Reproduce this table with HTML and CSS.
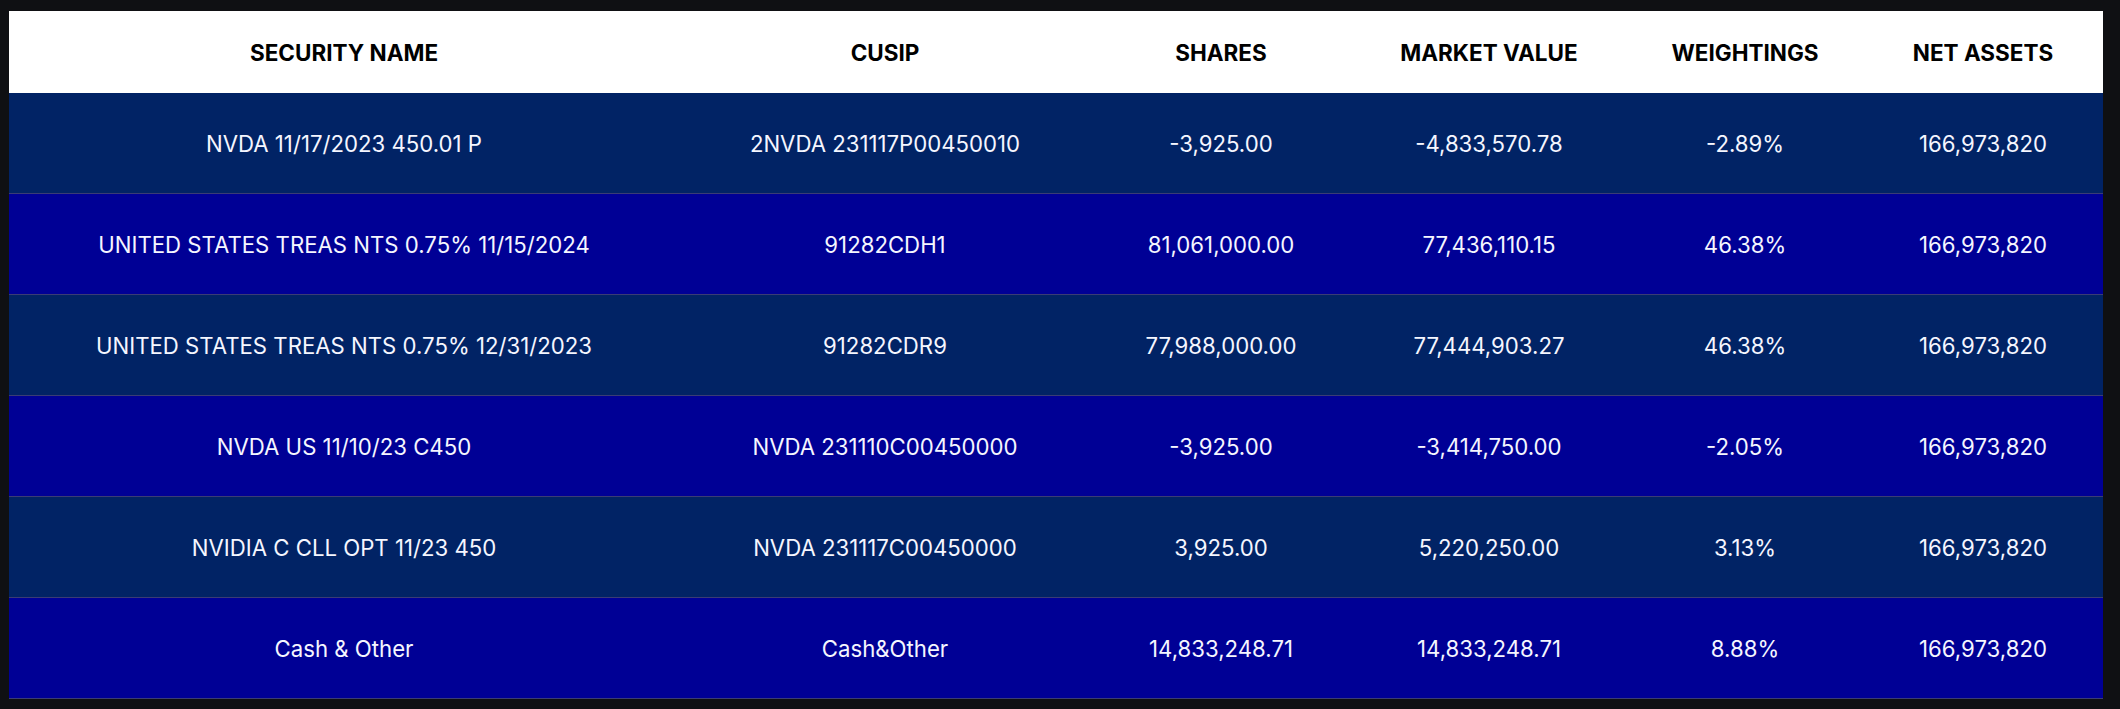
FILE: index.html
```html
<!DOCTYPE html>
<html lang="en">
<head>
<meta charset="utf-8">
<title>Holdings</title>
<link rel="stylesheet" href="styles.css">
</head>
<body>
<div class="frame">
  <table class="holdings">
    <colgroup>
      <col class="c-name">
      <col class="c-cusip">
      <col class="c-shares">
      <col class="c-mv">
      <col class="c-weight">
      <col class="c-net">
    </colgroup>
    <thead>
      <tr>
        <th>SECURITY NAME</th>
        <th>CUSIP</th>
        <th>SHARES</th>
        <th>MARKET VALUE</th>
        <th>WEIGHTINGS</th>
        <th>NET ASSETS</th>
      </tr>
    </thead>
    <tbody>
      <tr class="navy">
        <td>NVDA 11/17/2023 450.01 P</td>
        <td>2NVDA 231117P00450010</td>
        <td>-3,925.00</td>
        <td>-4,833,570.78</td>
        <td>-2.89%</td>
        <td>166,973,820</td>
      </tr>
      <tr class="blue">
        <td>UNITED STATES TREAS NTS 0.75% 11/15/2024</td>
        <td>91282CDH1</td>
        <td>81,061,000.00</td>
        <td>77,436,110.15</td>
        <td>46.38%</td>
        <td>166,973,820</td>
      </tr>
      <tr class="navy">
        <td>UNITED STATES TREAS NTS 0.75% 12/31/2023</td>
        <td>91282CDR9</td>
        <td>77,988,000.00</td>
        <td>77,444,903.27</td>
        <td>46.38%</td>
        <td>166,973,820</td>
      </tr>
      <tr class="blue">
        <td>NVDA US 11/10/23 C450</td>
        <td>NVDA 231110C00450000</td>
        <td>-3,925.00</td>
        <td>-3,414,750.00</td>
        <td>-2.05%</td>
        <td>166,973,820</td>
      </tr>
      <tr class="navy">
        <td>NVIDIA C CLL OPT 11/23 450</td>
        <td>NVDA 231117C00450000</td>
        <td>3,925.00</td>
        <td>5,220,250.00</td>
        <td>3.13%</td>
        <td>166,973,820</td>
      </tr>
      <tr class="blue">
        <td>Cash &amp; Other</td>
        <td>Cash&amp;Other</td>
        <td>14,833,248.71</td>
        <td>14,833,248.71</td>
        <td>8.88%</td>
        <td>166,973,820</td>
      </tr>
    </tbody>
  </table>
</div>
</body>
</html>
```

FILE: styles.css
```css
html, body {
  margin: 0;
  padding: 0;
  background: #0f1013;
}

.frame {
  padding: 11px 17px 10px 9px;
  font-family: Inter, "Noto Sans", "Liberation Sans", sans-serif;
}

.holdings {
  width: 2094px;
  table-layout: fixed;
  border-collapse: collapse;
  border-spacing: 0;
}

.c-name { width: 670px; }
.c-cusip { width: 412px; }
.c-shares { width: 260px; }
.c-mv { width: 276px; }
.c-weight { width: 236px; }
.c-net { width: 240px; }

.holdings th {
  background: #ffffff;
  color: #000000;
  font-weight: 700;
  font-size: 22.5px;
  height: 82px;
  padding: 0;
  text-align: center;
  vertical-align: middle;
}

.holdings td {
  color: #f5f6ff;
  font-size: 22.2px;
  font-weight: 400;
  height: 100px;
  padding: 0;
  text-align: center;
  vertical-align: middle;
  border-bottom: 1px solid #3a3c74;
  white-space: nowrap;
}

.holdings tr.navy td { background: #012365; }
.holdings tr.blue td { background: #000095; }
```
